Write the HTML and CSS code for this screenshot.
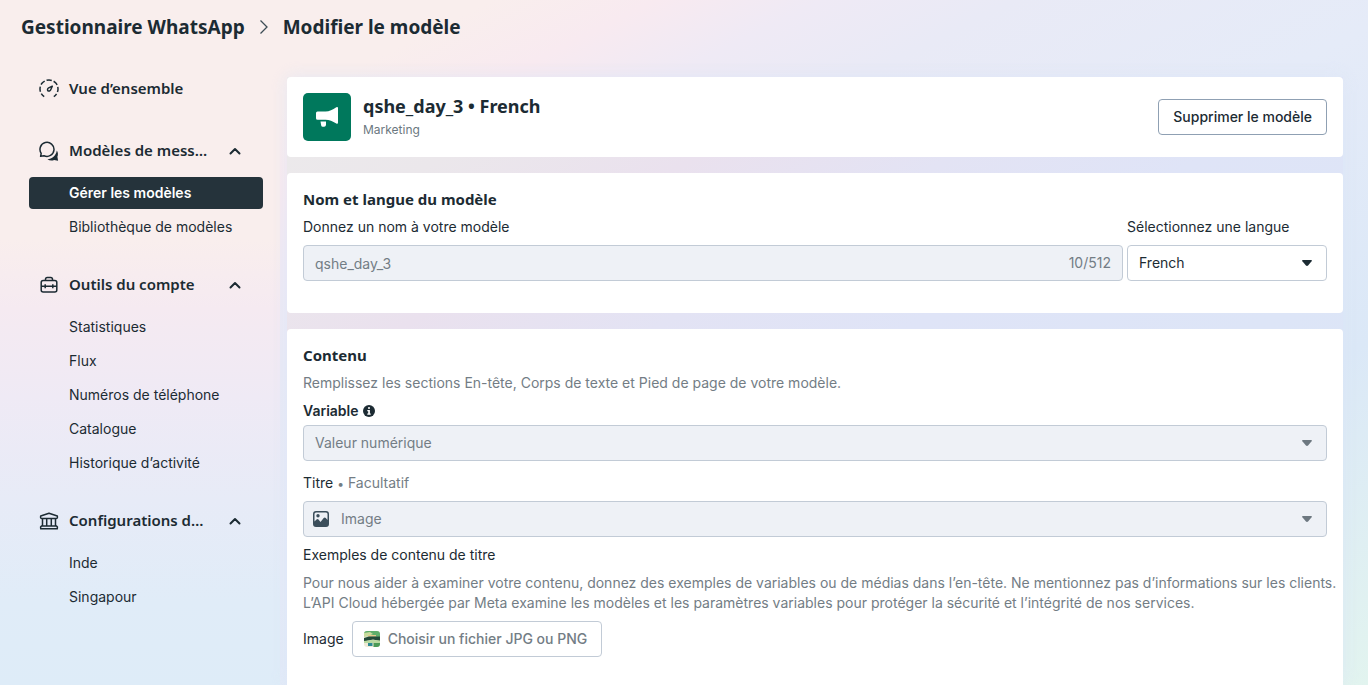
FILE: index.html
```html
<!DOCTYPE html>
<html lang="fr">
<head>
<meta charset="utf-8">
<meta name="viewport" content="width=device-width, initial-scale=1">
<title>Modifier le modèle</title>
<link rel="stylesheet" href="styles.css">
</head>
<body>
<header class="crumbs">
  <a class="crumb" href="#">Gestionnaire WhatsApp</a>
  <svg class="crumb-sep" viewBox="0 0 10 16" aria-hidden="true"><path d="M1.5 1.5 8 8l-6.5 6.5"/></svg>
  <h1 class="crumb">Modifier le modèle</h1>
</header>
<div class="layout">
  <nav class="sidebar" aria-label="Navigation">
    <a class="nav-head nav-head-single" href="#">
      <svg class="nav-icon" viewBox="0 0 20 20" aria-hidden="true"><path d="M5.200 17.600A9 9 0 1 1 14.800 17.600" stroke-dasharray="5.200 2" stroke-dashoffset="1"/><path d="M13.300 7.200 11.600 11a1.900 1.900 0 0 1-2.600.9 1.900 1.900 0 0 1 .2-2.700z"/></svg>
      <span class="nav-title">Vue d’ensemble</span>
    </a>
    <section class="nav-group">
      <button class="nav-head" type="button" aria-expanded="true">
        <svg class="nav-icon" viewBox="0 0 20 20" aria-hidden="true"><path d="M1.600 15.300l.6-3A7 7 0 1 1 5 14.700z"/><path class="solid" d="M17.800 9.500c1.300 2 1.500 4.200.6 6.300l.7 3.900-4-.7c-2.300.9-4.800.6-6.700-.8 4.600-.3 8.600-3.300 9.400-8.700z"/></svg>
        <span class="nav-title">Modèles de mess…</span>
        <svg class="nav-chevron" viewBox="0 0 12 8" aria-hidden="true"><path d="M1.500 6.500 6 2l4.500 4.500"/></svg>
      </button>
      <ul class="nav-list">
        <li><a class="nav-link active" href="#" aria-current="page">Gérer les modèles</a></li>
        <li><a class="nav-link" href="#">Bibliothèque de modèles</a></li>
      </ul>
    </section>
    <section class="nav-group">
      <button class="nav-head" type="button" aria-expanded="true">
        <svg class="nav-icon" viewBox="0 0 20 20" aria-hidden="true"><rect x="2.200" y="5.500" width="15.600" height="11.500" rx="2"/><path d="M6.500 5.500V4.300q0-1.800 1.800-1.800h3.400q1.800 0 1.800 1.800v1.200M2.200 11.300h15.600M6.200 9.200v4M13.800 9.200v4"/></svg>
        <span class="nav-title">Outils du compte</span>
        <svg class="nav-chevron" viewBox="0 0 12 8" aria-hidden="true"><path d="M1.500 6.500 6 2l4.500 4.500"/></svg>
      </button>
      <ul class="nav-list">
        <li><a class="nav-link" href="#">Statistiques</a></li>
        <li><a class="nav-link" href="#">Flux</a></li>
        <li><a class="nav-link" href="#">Numéros de téléphone</a></li>
        <li><a class="nav-link" href="#">Catalogue</a></li>
        <li><a class="nav-link" href="#">Historique d’activité</a></li>
      </ul>
    </section>
    <section class="nav-group">
      <button class="nav-head" type="button" aria-expanded="true">
        <svg class="nav-icon" viewBox="0 0 20 20" aria-hidden="true"><path d="M10 2.200 18.300 5q.5 2.500-.8 2.500h-15Q1.200 7.500 1.700 5zM3.500 7.500V15M7.700 7.500V15M12.300 7.500V15M16.500 7.500V15M2.500 15h15q1.500.8.800 2.800H1.700Q1 15.800 2.500 15z"/></svg>
        <span class="nav-title">Configurations d…</span>
        <svg class="nav-chevron" viewBox="0 0 12 8" aria-hidden="true"><path d="M1.500 6.500 6 2l4.500 4.500"/></svg>
      </button>
      <ul class="nav-list">
        <li><a class="nav-link" href="#">Inde</a></li>
        <li><a class="nav-link" href="#">Singapour</a></li>
      </ul>
    </section>
  </nav>
  <main class="content">
    <section class="card summary">
      <svg class="badge" viewBox="0 0 48 48" aria-hidden="true"><rect width="48" height="48" rx="5"/><path d="M14.500 18.500h8c4 0 7-1.500 10.800-4.200q1.700-.8 1.700 1v14.200q0 1.800-1.700 1C29.500 28 26.500 26.700 22.500 26.700h-8q-1.500 0-1.500-1.500V20q0-1.500 1.500-1.500zM17.500 28.500h5.500v3.500q-.3 1.800-1.800 1.800h-1.500q-1.200 0-1.500-1.300z"/></svg>
      <div class="summary-text">
        <h2 class="summary-title">qshe_day_3 • French</h2>
        <p class="summary-kind">Marketing</p>
      </div>
      <button class="button" type="button">Supprimer le modèle</button>
    </section>
    <section class="card name-card">
      <h2 class="card-title">Nom et langue du modèle</h2>
      <div class="name-row">
        <div class="name-field">
          <label class="label" for="name">Donnez un nom à votre modèle</label>
          <div class="box muted">
            <input class="control" id="name" type="text" value="qshe_day_3" disabled>
            <span class="count">10/512</span>
          </div>
        </div>
        <div class="lang-field">
          <label class="label" for="lang">Sélectionnez une langue</label>
          <div class="box">
            <select class="control" id="lang"><option>French</option></select>
            <svg class="caret" viewBox="0 0 10 6" aria-hidden="true"><path d="M.8 0h8.400q1.200.3.400 1.300L6.300 5.200Q5 6.600 3.700 5.200L.4 1.300Q-.4.300.8 0z"/></svg>
          </div>
        </div>
      </div>
    </section>
    <section class="card body-card">
      <h2 class="card-title">Contenu</h2>
      <p class="help">Remplissez les sections En-tête, Corps de texte et Pied de page de votre modèle.</p>
      <label class="label strong" for="variable">Variable
        <svg class="info" viewBox="0 0 12 12" aria-hidden="true"><circle cx="6" cy="6" r="6"/><path d="M5 2.200h2v1.600H5zM4.300 5h2.600v3.500h.8v1.200H4.300V8.500h.9V6.200h-.9z"/></svg>
      </label>
      <div class="box muted">
        <select class="control" id="variable" disabled><option>Valeur numérique</option></select>
        <svg class="caret" viewBox="0 0 10 6" aria-hidden="true"><path d="M.8 0h8.400q1.200.3.400 1.300L6.300 5.200Q5 6.600 3.700 5.200L.4 1.300Q-.4.300.8 0z"/></svg>
      </div>
      <label class="label spaced" for="header">Titre <span class="optional"><span class="dot">•</span>Facultatif</span></label>
      <div class="box muted">
        <svg class="media-icon" viewBox="0 0 16 16" aria-hidden="true"><path fill-rule="evenodd" d="M3 0h10q3 0 3 3v10q0 3-3 3H3q-3 0-3-3V3q0-3 3-3zM3 1.500Q1.500 1.500 1.500 3v7.500l2-2q1-1 2 0L7.500 11l3.200-4q1.100-1.200 2.100 0l1.700 2V3q0-1.500-1.500-1.500z"/><circle cx="5" cy="4.800" r="1.700"/></svg>
        <select class="control with-icon" id="header" disabled><option>Image</option></select>
        <svg class="caret" viewBox="0 0 10 6" aria-hidden="true"><path d="M.8 0h8.400q1.200.3.400 1.300L6.300 5.200Q5 6.600 3.700 5.200L.4 1.300Q-.4.300.8 0z"/></svg>
      </div>
      <h3 class="sub-title">Exemples de contenu de titre</h3>
      <p class="help wide">Pour nous aider à examiner votre contenu, donnez des exemples de variables ou de médias dans l’en-tête. Ne mentionnez pas d’informations sur les clients. L’API Cloud hébergée par Meta examine les modèles et les paramètres variables pour protéger la sécurité et l’intégrité de nos services.</p>
      <div class="upload">
        <span id="upload-label">Image</span>
        <button class="button file" type="button" aria-describedby="upload-label">
          <svg class="thumb" viewBox="0 0 16 16" aria-hidden="true"><rect width="16" height="16" rx="3" fill="#efe9d6"/><path d="M0 5V3q0-3 3-3h10q3 0 3 3v3z" fill="#5fae6b"/><path d="M0 2l6-1 3 2-5 2-4 1z" fill="#c9dc9e"/><path d="M4 4h8v1.500H4z" fill="#e8c98c"/><path d="M0 7l5-1.500h11V10L9 8.500 0 10.500z" fill="#234b3a"/><path d="M0 10l8-1 8 .5V12H0z" fill="#b9d9a0"/><path d="M4 12h4.500v3H4z" fill="#2b8a93"/><path d="M9.500 12H16v1q0 3-3 3H9.500z" fill="#4c9a57"/></svg>
          <span>Choisir un fichier JPG ou PNG</span>
        </button>
      </div>
    </section>
  </main>
</div>
</body>
</html>
```
FILE: styles.css
```css
* { box-sizing: border-box; }

body {
  margin: 0;
  min-height: 100vh;
  display: flex;
  flex-direction: column;
  font: 400 14px/20px Inter, "Liberation Sans", sans-serif;
  color: #1c2b33;
  background:
    linear-gradient(to bottom, #f9eeed 0%, #f9eeed 35%, #f5eaf1 45%, #efeaf5 58%, #e7ebf7 73%, #e0ecf8 88%, #deecf8 100%) 0 0 / 280px 100% no-repeat,
    linear-gradient(to bottom right, #f9eeed 0%, #f9eeed 18%, #f8eaf0 24%, #efeaf5 30%, #e9eaf6 37%, #e5ebf8 52%, #dbe8f7 75%, #e2f4ef 100%);
}

h1, h2, h3, p, ul { margin: 0; padding: 0; }
ul { list-style: none; }
a { color: inherit; text-decoration: none; }
button, input, select { font: inherit; color: inherit; }

.crumbs {
  display: flex;
  align-items: center;
  gap: 14px;
  padding: 12px 21px;
}
.crumb { font: 700 19px/30px "Noto Sans", sans-serif; }
.crumb-sep { width: 10px; height: 16px; fill: none; stroke: #3d4c55; stroke-width: 1.3; }

.layout { flex: 1; display: flex; gap: 24px; padding: 0 25px 0 29px; }

.sidebar {
  flex: 0 0 234px;
  display: flex;
  flex-direction: column;
  gap: 20px;
  padding-top: 15px;
}
.nav-head {
  display: flex;
  align-items: center;
  gap: 10px;
  width: 100%;
  height: 44px;
  margin-bottom: 4px;
  padding: 0 22px 0 10px;
  border: 0;
  background: none;
  text-align: left;
}
.nav-head-single { height: 40px; margin: 0; }
.nav-icon { flex: none; width: 20px; height: 20px; fill: none; stroke: #1c2b33; stroke-width: 1.5; stroke-linejoin: round; }
.nav-icon .solid { fill: #1c2b33; stroke: none; }
.nav-title { flex: 1; padding-bottom: 2px; font: 600 15px/20px "Noto Sans", sans-serif; white-space: nowrap; }
.nav-chevron { width: 12px; height: 8px; fill: none; stroke: #1c2b33; stroke-width: 2; stroke-linecap: round; stroke-linejoin: round; }
.nav-list { display: flex; flex-direction: column; gap: 2px; }
.nav-link { display: block; padding: 6px 16px 6px 40px; border-radius: 4px; }
.nav-link.active { background: #25333b; color: #fff; font-weight: 600; }

.content {
  flex: 1;
  min-width: 0;
  display: flex;
  flex-direction: column;
  gap: 16px;
  margin-top: 23px;
  background: linear-gradient(to bottom right, #ecebeb 0%, #ebe7eb 14%, #eae1ee 26%, #e3e3f4 38%, #dfe4f7 50%, #d9e7f7 100%);
  box-shadow: 0 0 16px 0 rgba(219, 228, 246, .6);
}

.card { padding: 16px; border-radius: 4px; background: #fff; }
.card-title { font: 700 15px/20px "Noto Sans", sans-serif; }

.summary { display: flex; align-items: center; gap: 12px; }
.badge { flex: none; width: 48px; height: 48px; fill: #fff; }
.badge rect { fill: #00785c; }
.summary-text { flex: 1; }
.summary-title { font: 700 18px/24px "Noto Sans", sans-serif; }
.summary-kind { padding-top: 2px; font-size: 12px; color: #6b787f; }

.button {
  height: 36px;
  padding: 0 14px;
  border: 1px solid #8fa0b3;
  border-radius: 4px;
  background: #fff;
  font-weight: 500;
}

.name-card { padding-bottom: 32px; }
.name-row { display: flex; gap: 4px; margin-top: 8px; }
.name-field { flex: 1; }
.lang-field { flex: 0 0 200px; }
.name-row .label { margin-bottom: 8px; }
.label { display: block; }

.box {
  position: relative;
  display: flex;
  align-items: center;
  height: 36px;
  border: 1px solid #c2cbd6;
  border-radius: 4px;
  background: #fff;
}
.muted { background: #eef1f6; color: #737d85; }
.control {
  flex: 1;
  min-width: 0;
  height: 100%;
  padding: 0 11px;
  border: 0;
  background: none;
  appearance: none;
  opacity: 1;
}
.with-icon { padding-left: 37px; }
.count { padding-right: 11px; }
.caret { position: absolute; right: 14px; width: 10px; height: 6px; fill: #1c2b33; pointer-events: none; }
.muted .caret { fill: #6d7880; }
.media-icon { position: absolute; left: 9px; width: 16px; height: 16px; fill: #3b4e5b; pointer-events: none; }

.body-card { flex: 1; border-radius: 4px 4px 0 0; }
.help { margin: 8px 0; color: #737d85; }
.wide { margin-right: -16px; }
.strong { display: flex; align-items: center; gap: 4px; margin-bottom: 4px; font-weight: 600; }
.info { width: 12px; height: 12px; fill: #1c2b33; }
.info path { fill: #fff; }
.spaced { margin: 12px 0 8px; }
.optional { color: #737d85; }
.dot { margin-right: 4px; font-size: 12px; line-height: 1; }
.sub-title { margin-top: 8px; font-size: 14px; font-weight: 400; line-height: 20px; }
.upload { display: flex; align-items: center; gap: 8px; }
.file { display: flex; align-items: center; gap: 8px; padding: 0 14px 0 11px; border-color: #c2cbd6; color: #737d85; }
.thumb { width: 16px; height: 16px; }
```
